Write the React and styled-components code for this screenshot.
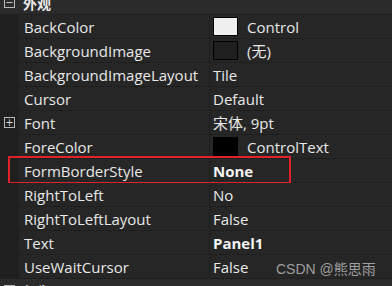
import React from "react";
import styled, { createGlobalStyle } from "styled-components";

const GlobalStyle = createGlobalStyle`
  html, body {
    margin: 0;
    padding: 0;
    background: #1f1f1f;
  }
`;

const rows = [
  { name: "BackColor", value: "Control", swatch: "#f0f0f0" },
  { name: "BackgroundImage", value: "(无)", swatch: "#1f1f1f" },
  { name: "BackgroundImageLayout", value: "Tile" },
  { name: "Cursor", value: "Default" },
  { name: "Font", value: "宋体, 9pt", expand: true },
  { name: "ForeColor", value: "ControlText", swatch: "#000000" },
  { name: "FormBorderStyle", value: "None", bold: true, marked: true },
  { name: "RightToLeft", value: "No" },
  { name: "RightToLeftLayout", value: "False" },
  { name: "Text", value: "Panel1", bold: true },
  { name: "UseWaitCursor", value: "False" },
];

function App() {
  return (
    <Page>
      <GlobalStyle />
      <Grid>
        <Category>
          <Toggle>−</Toggle>
          <CategoryName>外观</CategoryName>
        </Category>
        {rows.map((r) => (
          <Row key={r.name}>
            <Gutter>{r.expand && <Toggle>+</Toggle>}</Gutter>
            <Label>{r.name}</Label>
            <Value $bold={r.bold}>
              {r.swatch && <Swatch $color={r.swatch} />}
              {r.value}
            </Value>
            {r.marked && <Mark />}
          </Row>
        ))}
        <Category>
          <Toggle>−</Toggle>
          <CategoryName>行为</CategoryName>
        </Category>
      </Grid>
      <Watermark>CSDN @熊思雨</Watermark>
    </Page>
  );
}

export default App;

const Page = styled.div`
  position: relative;
  width: 392px;
  height: 286px;
  overflow: hidden;
  font-family: "Open Sans", "Noto Sans CJK SC", sans-serif;
  font-size: 15px;
  color: #e8e8e8;
`;

const Grid = styled.div`
  display: flex;
  flex-direction: column;
  gap: 1px;
  margin-top: -9px;
  background: #1f1f1f;
`;

const Category = styled.div`
  display: flex;
  align-items: center;
  height: 23px;
  background: #2b2b2b;
`;

const CategoryName = styled.span`
  margin-left: 8px;
  font-weight: 700;
  font-family: "Noto Sans CJK SC", sans-serif;
  font-size: 14px;
`;

const Toggle = styled.span`
  display: flex;
  align-items: center;
  justify-content: center;
  box-sizing: border-box;
  width: 11px;
  height: 11px;
  margin-left: 4px;
  border: 1px solid #b8b8b8;
  font-family: "DejaVu Sans", sans-serif;
  font-size: 10px;
  line-height: 1;
  color: #d8d8d8;
`;

const Row = styled.div`
  position: relative;
  display: grid;
  grid-template-columns: 18px 190px 1fr;
  column-gap: 1px;
  height: 23px;
  background: #1f1f1f;
`;

const Gutter = styled.div`
  display: flex;
  align-items: center;
  background: #1f1f1f;
`;

const Label = styled.div`
  display: flex;
  align-items: center;
  padding-left: 5px;
  background: #262626;
  white-space: nowrap;
  overflow: hidden;
`;

const Value = styled.div`
  display: flex;
  align-items: center;
  padding-left: 3px;
  background: #262626;
  white-space: nowrap;
  font-weight: ${(p) => (p.$bold ? 700 : 400)};
  color: ${(p) => (p.$bold ? "#f4f4f4" : "#e8e8e8")};
`;

const Swatch = styled.span`
  box-sizing: border-box;
  width: 25px;
  height: 19px;
  margin-right: 9px;
  border: 1px solid #000;
  background: ${(p) => p.$color};
`;

const Mark = styled.div`
  position: absolute;
  left: 8px;
  top: -3px;
  width: 283px;
  height: 28px;
  box-sizing: border-box;
  border: 2px solid #e0232b;
  pointer-events: none;
`;

const Watermark = styled.div`
  position: absolute;
  left: 276px;
  top: 258px;
  font-family: "Liberation Sans", "Noto Sans CJK SC", sans-serif;
  font-size: 14px;
  color: rgba(200, 200, 200, 0.75);
`;
